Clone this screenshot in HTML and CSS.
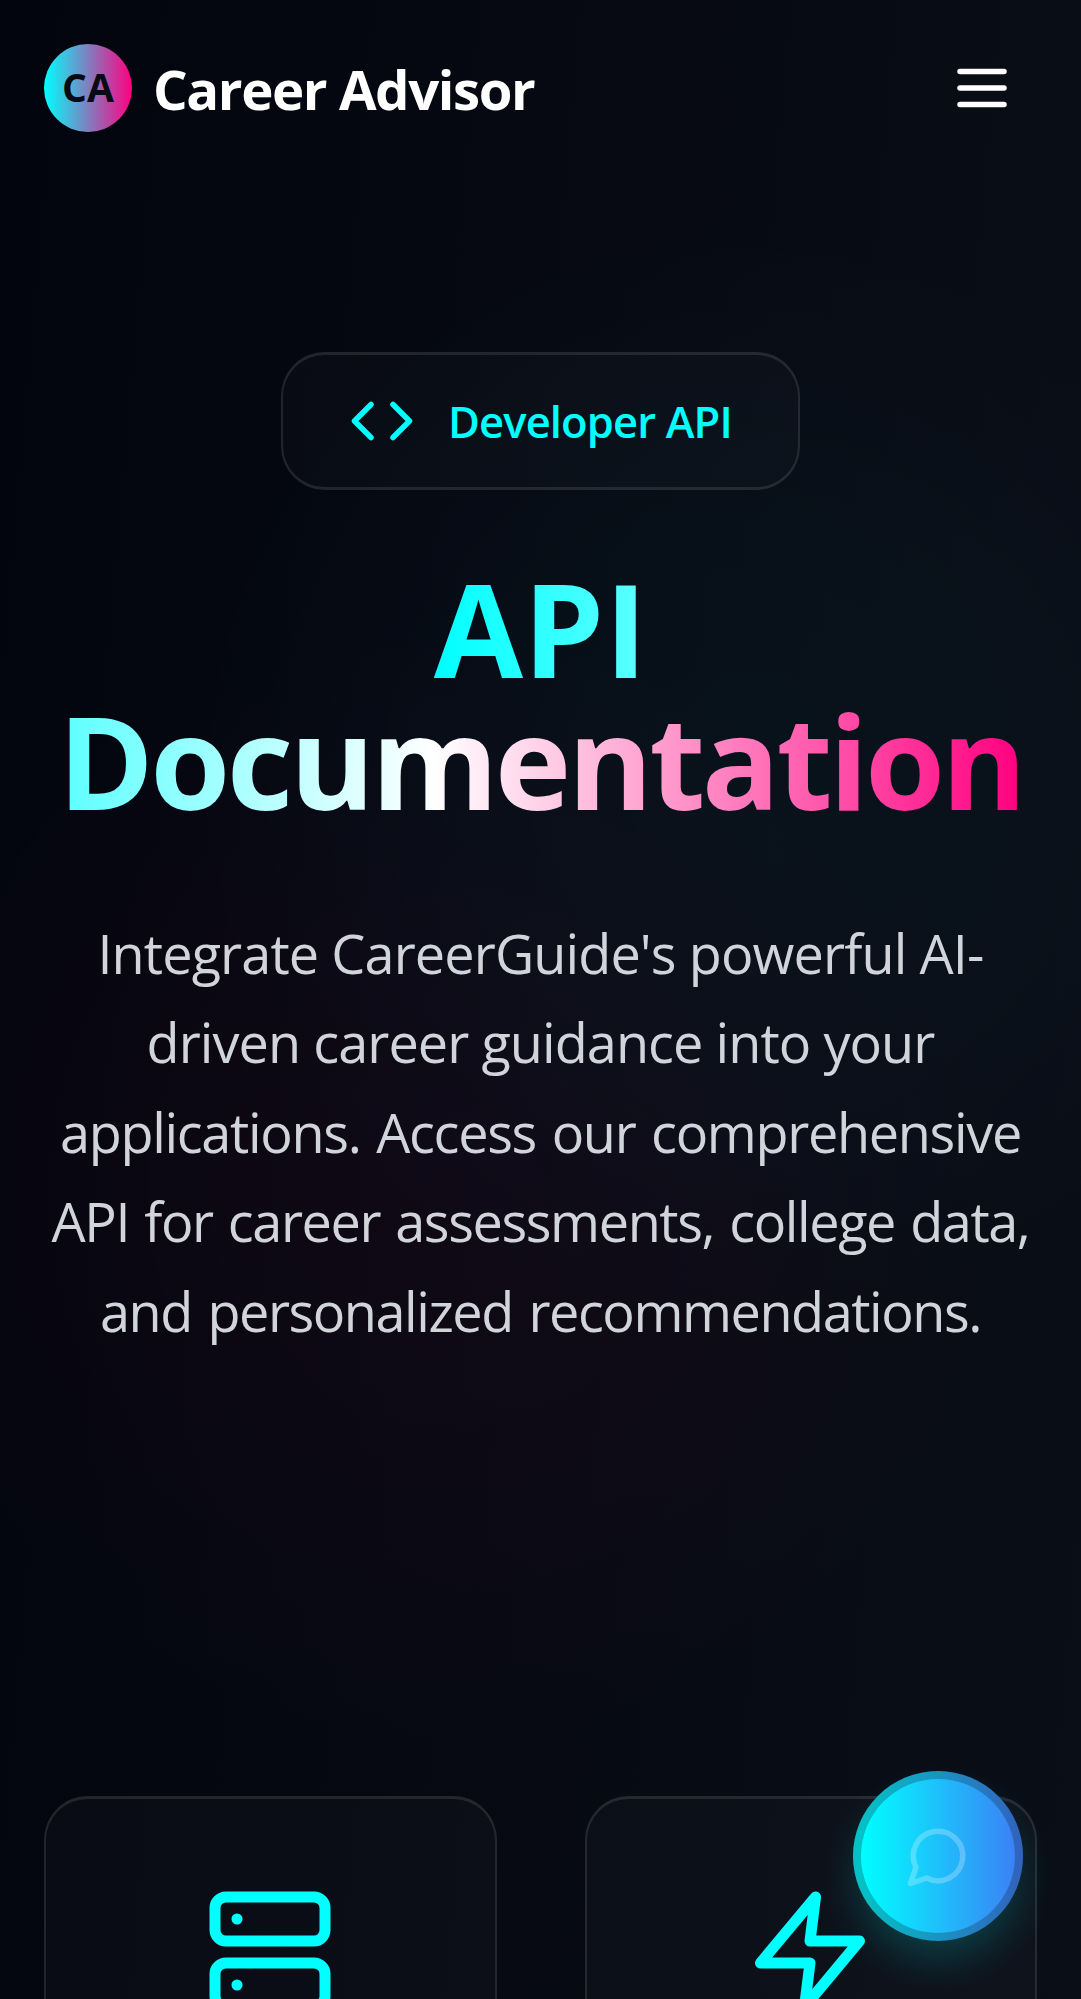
FILE: index.html
```html
<!DOCTYPE html>
<html lang="en">
<head>
<meta charset="utf-8">
<title>API Documentation - Career Advisor</title>
<link rel="stylesheet" href="styles.css">
</head>
<body>
<div class="page">
  <header class="header">
    <div class="brand">
      <span class="brand-mark">CA</span>
      <span class="brand-name">Career Advisor</span>
    </div>
    <button class="menu" aria-label="Menu">
      <svg class="icon" viewBox="0 0 24 24"><path d="M4 6h16M4 12h16M4 18h16"/></svg>
    </button>
  </header>
  <main class="main">
    <section class="hero">
      <div class="badge">
        <svg class="icon" viewBox="0 0 24 24"><path d="m16 18 6-6-6-6M8 6l-6 6 6 6"/></svg>
        <span class="badge-text">Developer API</span>
      </div>
      <h1 class="title"><span class="title-gradient">API <span class="title-long">Documentation</span></span></h1>
      <p class="lead">
        <span class="lead-line line-1">Integrate CareerGuide's powerful AI-</span>
        <span class="lead-line line-2">driven career guidance into your</span>
        <span class="lead-line line-3">applications. Access our comprehensive</span>
        <span class="lead-line line-4">API for career assessments, college data,</span>
        <span class="lead-line line-5">and personalized recommendations.</span>
      </p>
    </section>
    <section class="cards">
      <div class="card">
        <svg class="icon icon-large" viewBox="0 0 24 24"><rect x="2" y="2" width="20" height="8" rx="2"/><rect x="2" y="14" width="20" height="8" rx="2"/><path d="M6 6h.01M6 18h.01"/></svg>
      </div>
      <div class="card">
        <svg class="icon icon-large" viewBox="0 0 24 24"><path d="M13 2 3 14h9l-1 8 10-12h-9z"/></svg>
      </div>
    </section>
  </main>
  <button class="chat" aria-label="Open chat">
    <svg class="icon" viewBox="0 0 24 24"><path d="M7.9 20A9 9 0 1 0 4 16.1L2 22Z"/></svg>
  </button>
</div>
</body>
</html>
```
FILE: styles.css
```css
* { box-sizing: border-box; }

body {
  margin: 0;
  background: #05070f;
  color: #fff;
  font-family: "Open Sans", "Noto Sans", sans-serif;
}

.page {
  position: relative;
  height: 1999px;
  overflow: hidden;
  background:
    radial-gradient(circle 560px at 740px 780px, rgba(0, 255, 255, .032), rgba(0, 255, 255, .02) 50%, transparent),
    radial-gradient(circle 570px at 450px 1190px, rgba(255, 0, 128, .04), rgba(255, 0, 128, .023) 50%, transparent),
    linear-gradient(95deg, #03050e, #0a0e17);
}

.icon {
  display: block;
  flex: none;
  width: 66px;
  height: 66px;
  fill: none;
  stroke: currentColor;
  stroke-width: 2;
  stroke-linecap: round;
  stroke-linejoin: round;
}

.header {
  display: flex;
  align-items: center;
  justify-content: space-between;
  height: 176px;
  padding: 0 66px 0 44px;
}

.brand { display: flex; align-items: center; gap: 21px; }

.brand-mark {
  display: flex;
  align-items: center;
  justify-content: center;
  width: 88px;
  height: 88px;
  padding: 0 0 3px;
  border-radius: 50%;
  background: linear-gradient(90deg, #00ffff, #ff0080);
  color: #0a0a14;
  font-size: 39px;
  font-weight: 700;
  line-height: 1;
}

.brand-name {
  margin-top: 2px;
  font-size: 54.5px;
  font-weight: 700;
  line-height: 77px;
  letter-spacing: -1.4px;
}

.menu {
  padding: 0;
  border: 0;
  background: none;
  color: #fff;
}

.main { padding: 176px 44px 0; }

.hero {
  display: flex;
  flex-direction: column;
  align-items: center;
  text-align: center;
}

.badge {
  display: flex;
  align-items: center;
  gap: 33px;
  width: 519px;
  height: 138px;
  padding: 0 66px;
  border: solid rgba(255, 255, 255, .1);
  border-width: 3px 2px;
  border-radius: 44px;
  background: rgba(255, 255, 255, .02);
  color: #00ffff;
}

.badge-text {
  font-size: 43.5px;
  font-weight: 600;
  letter-spacing: -.85px;
  white-space: nowrap;
}

.title {
  width: 990px;
  margin: 72px 0 0;
  font-size: 129.5px;
  font-weight: 700;
  line-height: 132px;
}

.title-gradient {
  background: linear-gradient(90deg, #00ffff 0%, #fff 50%, #ff0080 100%);
  -webkit-background-clip: text;
  background-clip: text;
  color: transparent;
}

.title-long { letter-spacing: -3.6px; }

.lead {
  margin: 83px 0 0;
  color: #d1d5db;
  font-size: 54px;
  line-height: 89.375px;
}

.lead-line { display: block; white-space: nowrap; }
.line-1 { letter-spacing: -.88px; }
.line-2 { letter-spacing: -.93px; }
.line-3 { letter-spacing: -1.32px; word-spacing: 3px; }
.line-4 { letter-spacing: -1.4px; word-spacing: 2.5px; }
.line-5 { letter-spacing: -1.44px; word-spacing: 3px; }

.cards {
  display: grid;
  grid-template-columns: 1fr 1fr;
  gap: 88px;
  margin-top: 440px;
}

.card {
  display: flex;
  justify-content: center;
  align-items: flex-start;
  height: 600px;
  padding: 87px 1px 0 0;
  border: solid rgba(255, 255, 255, .1);
  border-width: 3px 2px;
  border-radius: 44px;
  background: rgba(255, 255, 255, .022);
  color: #00ffff;
}

.icon-large { width: 132px; height: 132px; }

.chat {
  position: absolute;
  left: 853px;
  top: 1771px;
  display: flex;
  align-items: center;
  justify-content: center;
  width: 170px;
  height: 170px;
  padding: 0;
  border: 0;
  border-radius: 50%;
  background: linear-gradient(90deg, #00ffff 8px, #3b82f6 162px);
  box-shadow: inset 0 0 0 8px rgba(20, 25, 40, .27), 0 22px 44px -4px rgba(0, 255, 255, .2);
  color: rgba(255, 255, 255, .25);
}
```
